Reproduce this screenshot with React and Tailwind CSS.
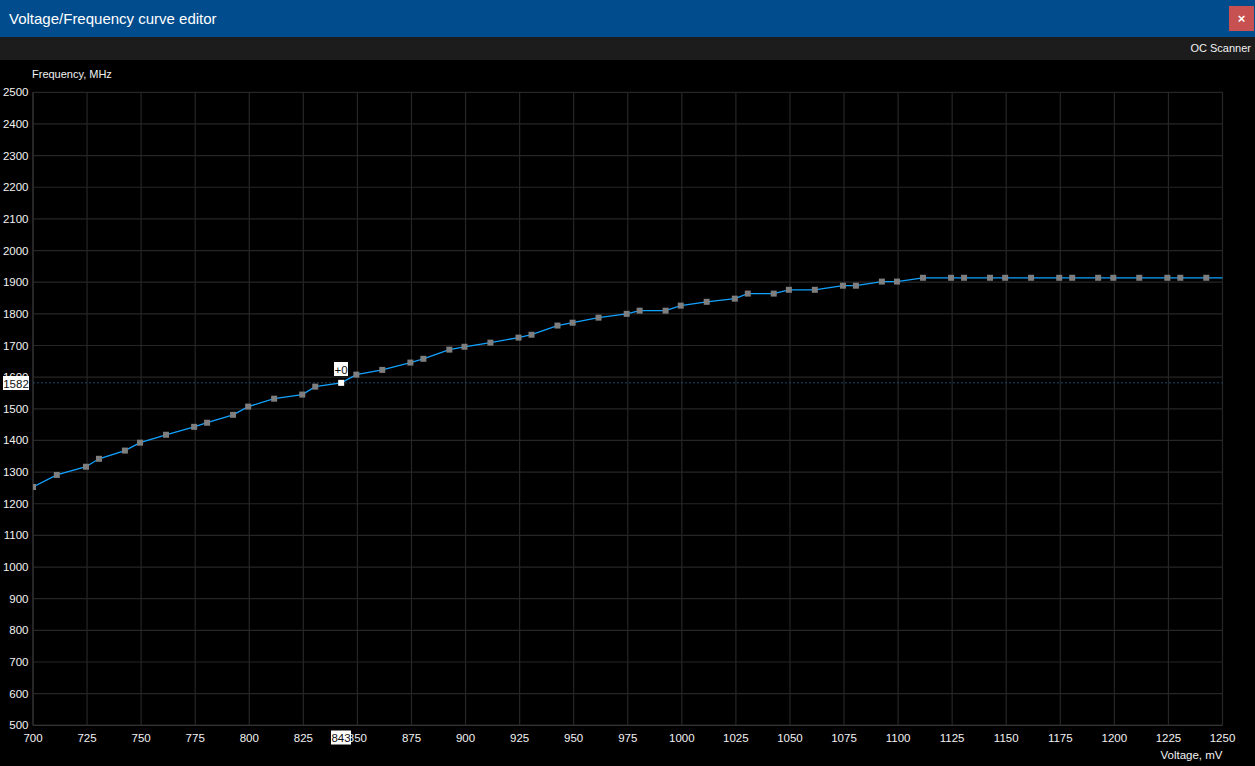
import React from "react";

// Plot geometry (page coordinates, the svg viewBox starts at y=60)
const X0 = 33;
const X1 = 1222.5;
const Y_TOP = 92.3;
const Y_BOT = 725.3;
const V_MIN = 700;
const V_MAX = 1250;
const F_MIN = 500;
const F_MAX = 2500;

const vx = (v) => X0 + ((v - V_MIN) / (V_MAX - V_MIN)) * (X1 - X0);
const fy = (f) => Y_BOT - ((f - F_MIN) / (F_MAX - F_MIN)) * (Y_BOT - Y_TOP);

// V/F curve points — [mV, MHz]
const POINTS = [
  [700, 1253], [711, 1291], [724.5, 1317], [730.5, 1342], [742.5, 1368],
  [749.5, 1393], [761.5, 1418], [774.5, 1443], [780.5, 1456], [792.5, 1481],
  [799.5, 1507], [811.5, 1532], [824.5, 1545], [830.5, 1570], [842.5, 1582],
  [849.5, 1608], [861.5, 1623], [874.5, 1646], [880.5, 1658], [892.5, 1687],
  [899.5, 1696], [911.5, 1709], [924.5, 1725], [930.5, 1734], [942.5, 1763],
  [949.5, 1772], [961.5, 1788], [974.5, 1800], [980.5, 1810], [992.5, 1810],
  [999.5, 1826], [1011.5, 1838], [1024.5, 1848], [1030.5, 1864], [1042.5, 1864],
  [1049.5, 1876], [1061.5, 1876], [1074.5, 1889], [1080.5, 1889], [1092.5, 1902],
  [1099.5, 1902], [1111.5, 1914], [1124.5, 1914], [1130.5, 1914], [1142.5, 1914],
  [1149.5, 1914], [1161.5, 1914], [1174.5, 1914], [1180.5, 1914], [1192.5, 1914],
  [1199.5, 1914], [1211.5, 1914], [1224.5, 1914], [1230.5, 1914], [1242.5, 1914],
];
const SELECTED = 14;

const V_TICKS = Array.from({ length: 23 }, (_, i) => 700 + i * 25);
const F_TICKS = Array.from({ length: 21 }, (_, i) => 500 + i * 100);

const FONT = { fontFamily: '"Liberation Sans", Arial, sans-serif' };

function CurveChart() {
  const line = POINTS.map(([v, f]) => `${vx(v).toFixed(1)},${fy(f).toFixed(1)}`).join(" ") +
    ` ${X1},${fy(1914).toFixed(1)}`;
  const [sv, sf] = POINTS[SELECTED];
  const sx = vx(sv);
  const sy = fy(sf);

  return (
    <svg className="block" width="1255" height="706" viewBox="0 60 1255 706" style={FONT}>
      <defs>
        <clipPath id="plot">
          <rect x={X0} y={Y_TOP - 4} width={X1 - X0 + 1} height={Y_BOT - Y_TOP + 8} />
        </clipPath>
      </defs>

      {/* grid */}
      {V_TICKS.map((v) => (
        <line key={"v" + v} x1={vx(v)} x2={vx(v)} y1={Y_TOP} y2={Y_BOT} stroke="#262626" strokeWidth="1.2" />
      ))}
      {F_TICKS.map((f) => (
        <line key={"f" + f} x1={X0} x2={X1} y1={fy(f)} y2={fy(f)} stroke="#262626" strokeWidth="1.2" />
      ))}
      <line x1={X0} x2={X0} y1={Y_TOP} y2={Y_BOT} stroke="#333" strokeWidth="1.2" />
      <line x1={X0} x2={X1} y1={Y_BOT} y2={Y_BOT} stroke="#333" strokeWidth="1.2" />

      {/* axis labels */}
      <text x="32" y="74" fill="#f2f2f2" fontSize="11" dominantBaseline="central">Frequency, MHz</text>
      {F_TICKS.map((f) => (
        <text key={"fl" + f} x="28.5" y={fy(f)} fill="#f2f2f2" fontSize="11.5" textAnchor="end" dominantBaseline="central">
          {f}
        </text>
      ))}
      {V_TICKS.map((v) => (
        <text key={"vl" + v} x={vx(v)} y="737.5" fill="#f2f2f2" fontSize="11.5" textAnchor="middle" dominantBaseline="central">
          {v}
        </text>
      ))}
      <text x="1222.5" y="755" fill="#f2f2f2" fontSize="11.5" textAnchor="end" dominantBaseline="central">Voltage, mV</text>

      {/* selected frequency guide */}
      <line x1={X0} x2={X1} y1={sy} y2={sy} stroke="#1b4868" strokeWidth="1" strokeDasharray="2 2" />

      {/* curve */}
      <g clipPath="url(#plot)">
        <polyline points={line} fill="none" stroke="#12a2ff" strokeWidth="1.3" />
        {POINTS.map(([v, f], i) =>
          i === SELECTED ? null : (
            <rect key={i} x={vx(v) - 3} y={fy(f) - 3} width="6" height="6" fill="#7e7e7e" />
          )
        )}
        <rect x={sx - 3} y={sy - 3} width="6" height="6" fill="#ffffff" />
      </g>

      {/* tooltips */}
      <rect x="3" y="376" width="26" height="14" fill="#ffffff" />
      <text x="16" y="383.5" fill="#111" fontSize="11.5" textAnchor="middle" dominantBaseline="central">1582</text>

      <rect x="334" y="362" width="14" height="14" fill="#ffffff" />
      <text x="341" y="369.5" fill="#111" fontSize="11.5" textAnchor="middle" dominantBaseline="central">+0</text>

      <rect x="331" y="730.5" width="20" height="14" fill="#ffffff" />
      <text x="341" y="737.5" fill="#111" fontSize="11.5" textAnchor="middle" dominantBaseline="central">843</text>
    </svg>
  );
}

export default function App() {
  return (
    <div className="flex h-[766px] w-[1255px] flex-col overflow-hidden bg-black" style={FONT}>
      {/* title bar */}
      <div className="flex h-[37px] shrink-0 items-center justify-between bg-[#004c8c] pl-[9px] pr-px">
        <span className="text-[15px] leading-none text-white">Voltage/Frequency curve editor</span>
        <button className="flex h-[25px] w-[25px] items-center justify-center bg-[#c75050] text-[13px] font-bold leading-none text-white">
          ×
        </button>
      </div>

      {/* toolbar */}
      <div className="flex h-[23px] shrink-0 items-center justify-end bg-[#1c1c1c] pr-[4px]">
        <span className="text-[11px] leading-none text-[#f2f2f2]">OC Scanner</span>
      </div>

      <CurveChart />
    </div>
  );
}
